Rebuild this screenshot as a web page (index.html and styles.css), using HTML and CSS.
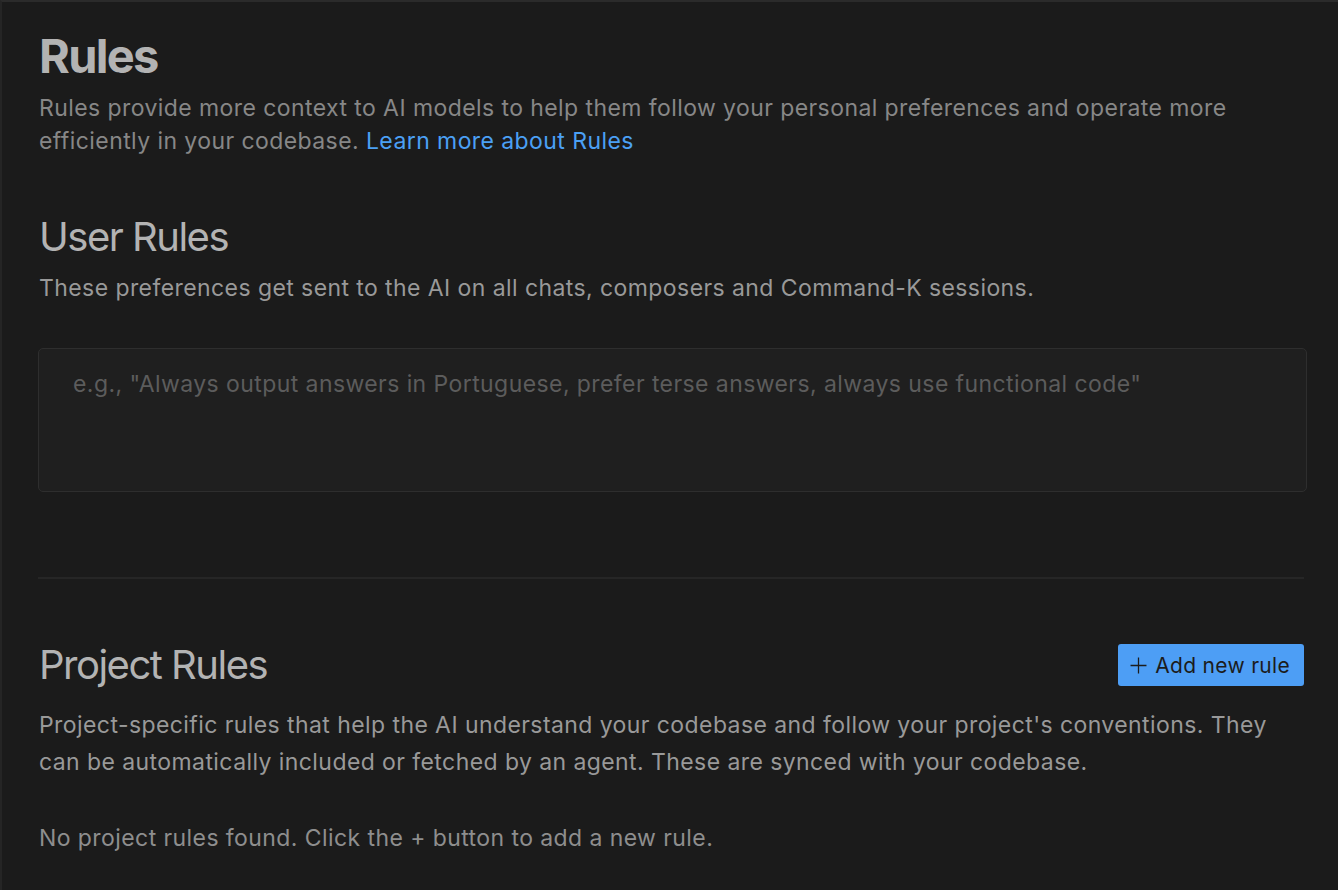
FILE: index.html
```html
<!DOCTYPE html>
<html lang="en">
<head>
<meta charset="utf-8">
<title>Rules</title>
<link rel="stylesheet" href="styles.css">
</head>
<body>
<main class="page">
  <section class="intro">
    <h1 class="title">Rules</h1>
    <p class="desc">Rules provide more context to AI models to help them follow your personal preferences and operate more efficiently in your codebase. <a class="link" href="#">Learn more about Rules</a></p>
  </section>

  <section class="user">
    <h2 class="heading">User Rules</h2>
    <p class="sub">These preferences get sent to the AI on all chats, composers and Command-K sessions.</p>
    <div class="textarea"><span class="placeholder">e.g., "Always output answers in Portuguese, prefer terse answers, always use functional code"</span></div>
  </section>

  <hr class="divider">

  <section class="project">
    <div class="project-head">
      <h2 class="heading">Project Rules</h2>
      <button class="add-btn"><svg class="plus" viewBox="0 0 16 16" width="17" height="17"><path d="M8 0.5v15M0.5 8h15" stroke="currentColor" stroke-width="1.2" fill="none"/></svg><span>Add new rule</span></button>
    </div>
    <p class="para project-desc">Project-specific rules that help the AI understand your codebase and follow your project's conventions. They can be automatically included or fetched by an agent. These are synced with your codebase.</p>
    <p class="para empty">No project rules found. Click the + button to add a new rule.</p>
  </section>
</main>
</body>
</html>
```

FILE: styles.css
```css
html, body {
  margin: 0;
  padding: 0;
  background: #1b1b1b;
}
body {
  font-family: Inter, "Noto Sans", "Liberation Sans", sans-serif;
  min-height: 890px;
  box-sizing: border-box;
  border-top: 2px solid #2b2b2b;
  border-left: 2px solid #252525;
}
.page {
  padding: 26px 34px 0 37px;
}
.title {
  margin: 0;
  font-size: 47px;
  font-weight: 700;
  color: #b3b3b3;
  line-height: 56px;
  letter-spacing: -1.7px;
}
.desc {
  margin: 8px 0 0;
  font-size: 23px;
  line-height: 33px;
  letter-spacing: 0.42px;
  color: #878787;
}
.link {
  color: #4ba0f5;
  text-decoration: none;
}
.user {
  margin-top: 55px;
}
.heading {
  margin: 0;
  font-size: 40px;
  font-weight: 400;
  color: #b3b3b3;
  line-height: 48px;
  letter-spacing: -1.5px;
}
.sub {
  margin: 11px 0 0;
  font-size: 23px;
  line-height: 33px;
  letter-spacing: 0.42px;
  color: #999999;
}
.textarea {
  margin-top: 43px;
  margin-left: -1px;
  margin-right: -3px;
  height: 144px;
  box-sizing: border-box;
  border: 1px solid #2e2e2e;
  border-radius: 5px;
  background: #1f1f1f;
  padding: 19px 34px;
}
.placeholder {
  display: block;
  font-size: 23px;
  line-height: 33px;
  letter-spacing: 0.42px;
  color: #5c5c5c;
}
.divider {
  margin: 85px 0 0 -1px;
  border: 0;
  border-top: 2px solid #262626;
  height: 0;
}
.project {
  margin-top: 62px;
}
.project-head {
  display: flex;
  align-items: center;
  justify-content: space-between;
}
.add-btn {
  display: flex;
  align-items: center;
  gap: 8px;
  height: 42px;
  padding: 0 14px 0 12px;
  border: 0;
  border-radius: 3px;
  background: #4d9ef5;
  color: #1c1c1c;
  font-family: inherit;
  font-size: 21px;
  letter-spacing: 0.3px;
  cursor: pointer;
}
.plus {
  width: 17px;
  height: 17px;
}
.para {
  margin: 0;
  font-size: 23px;
  line-height: 37px;
  letter-spacing: 0.42px;
  color: #999999;
}
.project-desc {
  margin-top: 18px;
}
.empty {
  margin-top: 39px;
  color: #8e8e8e;
}
```
